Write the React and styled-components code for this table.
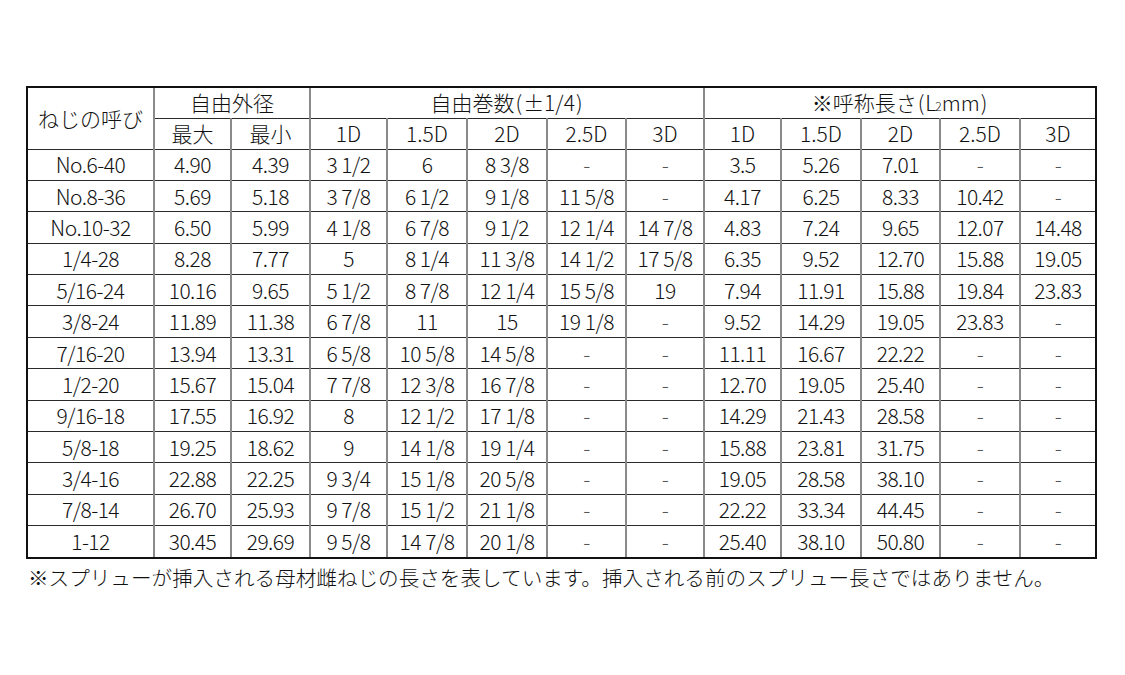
import React from "react";
import styled, { createGlobalStyle } from "styled-components";

const GlobalStyle = createGlobalStyle`
  html, body {
    margin: 0;
    padding: 0;
    background: #ffffff;
  }
  body {
    font-family: "Noto Sans CJK JP", "Noto Sans", sans-serif;
    color: #1a1a1a;
  }
`;

const Page = styled.div`
  width: 1125px;
  height: 675px;
  box-sizing: border-box;
  padding: 86px 0 0 26px;
  background: #fff;
`;

const Frame = styled.div`
  width: 1071px;
  box-sizing: border-box;
  border: 2px solid #111;
`;

const Table = styled.table`
  width: 100%;
  table-layout: fixed;
  border-collapse: collapse;
  border-style: hidden;
  font-family: "Noto Sans CJK JP", "Noto Sans", sans-serif;
  font-weight: 300;
  color: #111;
`;

const Col = styled.col`
  width: ${(p) => p.$w}px;
`;

const Row = styled.tr`
  height: ${(p) => p.$h}px;
`;

const Cell = styled.td`
  padding: 0;
  text-align: center;
  vertical-align: middle;
  white-space: nowrap;
  font-size: 21px;
  line-height: 1;
  letter-spacing: -0.5px;
  border-left: 2px solid #8a8a8a;
  border-right: 2px solid #8a8a8a;
  border-top: 1px solid #2a2a2a;
  border-bottom: 1px solid #2a2a2a;
  color: ${(p) => (p.$dash ? "#555" : "#111")};
`;

const HeadCell = styled(Cell).attrs({ as: "th" })`
  font-weight: 300;
  letter-spacing: 0;
`;

const Paren = styled.span`
  margin: 0 1px;
`;

const Sub = styled.span`
  font-size: 12px;
  vertical-align: baseline;
  margin-left: -1px;
`;

const Note = styled.p`
  margin: 6px 0 0 2px;
  font-size: 20.6px;
  line-height: 24px;
  font-weight: 300;
  letter-spacing: 0;
  white-space: nowrap;
  color: #111;
`;

const widths = [126, 77, 79, 77, 80, 80, 79, 78, 77, 80, 79, 80, 75];

const subHeads = ["最大", "最小", "1D", "1.5D", "2D", "2.5D", "3D", "1D", "1.5D", "2D", "2.5D", "3D"];

const rows = [
  ["No.6-40", "4.90", "4.39", "3 1/2", "6", "8 3/8", "-", "-", "3.5", "5.26", "7.01", "-", "-"],
  ["No.8-36", "5.69", "5.18", "3 7/8", "6 1/2", "9 1/8", "11 5/8", "-", "4.17", "6.25", "8.33", "10.42", "-"],
  ["No.10-32", "6.50", "5.99", "4 1/8", "6 7/8", "9 1/2", "12 1/4", "14 7/8", "4.83", "7.24", "9.65", "12.07", "14.48"],
  ["1/4-28", "8.28", "7.77", "5", "8 1/4", "11 3/8", "14 1/2", "17 5/8", "6.35", "9.52", "12.70", "15.88", "19.05"],
  ["5/16-24", "10.16", "9.65", "5 1/2", "8 7/8", "12 1/4", "15 5/8", "19", "7.94", "11.91", "15.88", "19.84", "23.83"],
  ["3/8-24", "11.89", "11.38", "6 7/8", "11", "15", "19 1/8", "-", "9.52", "14.29", "19.05", "23.83", "-"],
  ["7/16-20", "13.94", "13.31", "6 5/8", "10 5/8", "14 5/8", "-", "-", "11.11", "16.67", "22.22", "-", "-"],
  ["1/2-20", "15.67", "15.04", "7 7/8", "12 3/8", "16 7/8", "-", "-", "12.70", "19.05", "25.40", "-", "-"],
  ["9/16-18", "17.55", "16.92", "8", "12 1/2", "17 1/8", "-", "-", "14.29", "21.43", "28.58", "-", "-"],
  ["5/8-18", "19.25", "18.62", "9", "14 1/8", "19 1/4", "-", "-", "15.88", "23.81", "31.75", "-", "-"],
  ["3/4-16", "22.88", "22.25", "9 3/4", "15 1/8", "20 5/8", "-", "-", "19.05", "28.58", "38.10", "-", "-"],
  ["7/8-14", "26.70", "25.93", "9 7/8", "15 1/2", "21 1/8", "-", "-", "22.22", "33.34", "44.45", "-", "-"],
  ["1-12", "30.45", "29.69", "9 5/8", "14 7/8", "20 1/8", "-", "-", "25.40", "38.10", "50.80", "-", "-"],
];

export default function App() {
  return (
    <>
      <GlobalStyle />
      <Page>
        <Frame>
          <Table>
            <colgroup>
              {widths.map((w, i) => (
                <Col key={i} $w={w} />
              ))}
            </colgroup>
            <thead>
              <Row $h={30}>
                <HeadCell rowSpan={2}>ねじの呼び</HeadCell>
                <HeadCell colSpan={2}>自由外径</HeadCell>
                <HeadCell colSpan={5}>
                  自由巻数<Paren>(</Paren>±1/4<Paren>)</Paren>
                </HeadCell>
                <HeadCell colSpan={5}>
                  ※呼称長さ<Paren>(</Paren>L<Sub>2</Sub>mm<Paren>)</Paren>
                </HeadCell>
              </Row>
              <Row $h={31}>
                {subHeads.map((h, i) => (
                  <HeadCell key={i}>{h}</HeadCell>
                ))}
              </Row>
            </thead>
            <tbody>
              {rows.map((r, ri) => (
                <Row key={ri} $h={31.4}>
                  {r.map((v, ci) => (
                    <Cell key={ci} $dash={v === "-"}>
                      {v}
                    </Cell>
                  ))}
                </Row>
              ))}
            </tbody>
          </Table>
        </Frame>
        <Note>
          ※スプリューが挿入される母材雌ねじの長さを表しています。挿入される前のスプリュー長さではありません。
        </Note>
      </Page>
    </>
  );
}
